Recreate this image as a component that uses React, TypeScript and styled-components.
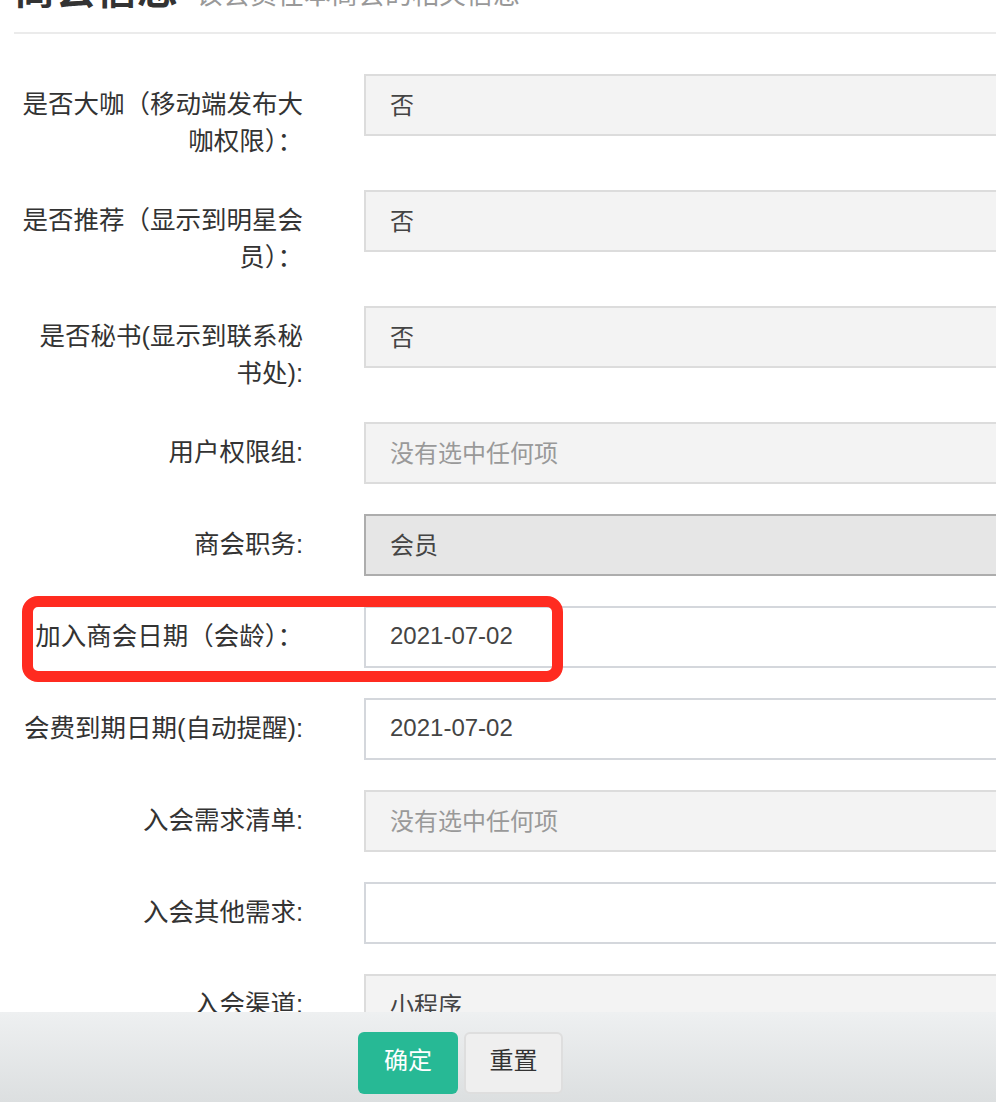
import styled, { createGlobalStyle } from 'styled-components';

const GlobalStyle = createGlobalStyle`
  html, body {
    margin: 0;
    padding: 0;
    background: #fff;
    overflow: hidden;
  }
  body {
    font-family: "Liberation Sans", "Noto Sans CJK SC", sans-serif;
    color: #333;
  }
`;

const Page = styled.div`
  width: 996px;
  height: 1102px;
  overflow: hidden;
  position: relative;
`;

const Header = styled.div`
  display: flex;
  align-items: baseline;
  gap: 18px;
  margin: -31px 0 40px 14px;
  padding-bottom: 20px;
  border-bottom: 2px solid #ebebeb;
`;

const Title = styled.h1`
  margin: 0;
  font-size: 41px;
  line-height: 42px;
  font-weight: 700;
  color: #333;
`;

const SubTitle = styled.span`
  font-size: 27px;
  color: #999;
`;

const Form = styled.div`
  display: flex;
  flex-direction: column;
  gap: 30px;
  padding-left: 17px;
  width: 1150px;
`;

const Row = styled.div`
  position: relative;
  display: grid;
  grid-template-columns: 286px 1fr;
  column-gap: 61px;
  align-items: start;
`;

const Label = styled.label`
  padding-top: 12px;
  font-size: 25.5px;
  line-height: 37px;
  text-align: right;
  color: #333;
`;

type Variant = 'disabled' | 'active' | 'plain';

const fieldBg: Record<Variant, string> = {
  disabled: '#f3f3f3',
  active: '#e6e6e6',
  plain: '#ffffff',
};

const fieldBorder: Record<Variant, string> = {
  disabled: '#dcdcdc',
  active: '#adadad',
  plain: '#d4d7dc',
};

const Field = styled.div<{ $variant: Variant; $placeholder?: boolean }>`
  box-sizing: border-box;
  height: 62px;
  padding: 0 24px 3px;
  display: flex;
  align-items: center;
  font-size: 24px;
  background: ${p => fieldBg[p.$variant]};
  border: 2px solid ${p => fieldBorder[p.$variant]};
  color: ${p => (p.$placeholder ? '#999' : '#444')};
`;

const Highlight = styled.div`
  position: absolute;
  left: 5px;
  top: -10px;
  width: 541px;
  height: 86px;
  box-sizing: border-box;
  border: 11px solid #ff2b20;
  border-radius: 16px;
  pointer-events: none;
`;

const Footer = styled.div`
  position: absolute;
  left: 0;
  right: 0;
  bottom: 0;
  height: 90px;
  box-sizing: border-box;
  padding: 20px 0 0 358px;
  display: flex;
  align-items: flex-start;
  gap: 6px;
  background: linear-gradient(to bottom, #eef0f1, #dcdfe0);
`;

const Button = styled.button<{ $primary?: boolean }>`
  box-sizing: border-box;
  width: ${p => (p.$primary ? '100px' : '99px')};
  height: 62px;
  padding: 0 0 4px;
  border-radius: 6px;
  font-family: inherit;
  font-size: 24px;
  line-height: 1;
  cursor: pointer;
  background: ${p => (p.$primary ? '#27b995' : '#efefef')};
  color: ${p => (p.$primary ? '#fff' : '#333')};
  border: ${p => (p.$primary ? 'none' : '2px solid #dedede')};
`;

interface Item {
  label: string;
  value: string;
  variant: Variant;
  placeholder?: boolean;
  highlight?: boolean;
}

const items: Item[] = [
  { label: '是否大咖（移动端发布大咖权限）：', value: '否', variant: 'disabled' },
  { label: '是否推荐（显示到明星会员）：', value: '否', variant: 'disabled' },
  { label: '是否秘书(显示到联系秘书处):', value: '否', variant: 'disabled' },
  { label: '用户权限组:', value: '没有选中任何项', variant: 'disabled', placeholder: true },
  { label: '商会职务:', value: '会员', variant: 'active' },
  { label: '加入商会日期（会龄）：', value: '2021-07-02', variant: 'plain', highlight: true },
  { label: '会费到期日期(自动提醒):', value: '2021-07-02', variant: 'plain' },
  { label: '入会需求清单:', value: '没有选中任何项', variant: 'disabled', placeholder: true },
  { label: '入会其他需求:', value: '', variant: 'plain' },
  { label: '入会渠道:', value: '小程序', variant: 'disabled' },
  { label: '备注:', value: '', variant: 'plain' },
];

export default function App() {
  return (
    <Page>
      <GlobalStyle />
      <Header>
        <Title>商会信息</Title>
        <SubTitle>该会员在本商会的相关信息</SubTitle>
      </Header>

      <Form>
        {items.map(item => (
          <Row key={item.label}>
            <Label>{item.label}</Label>
            <Field $variant={item.variant} $placeholder={item.placeholder}>
              {item.value}
            </Field>
            {item.highlight && <Highlight />}
          </Row>
        ))}
      </Form>

      <Footer>
        <Button $primary>确定</Button>
        <Button>重置</Button>
      </Footer>
    </Page>
  );
}
